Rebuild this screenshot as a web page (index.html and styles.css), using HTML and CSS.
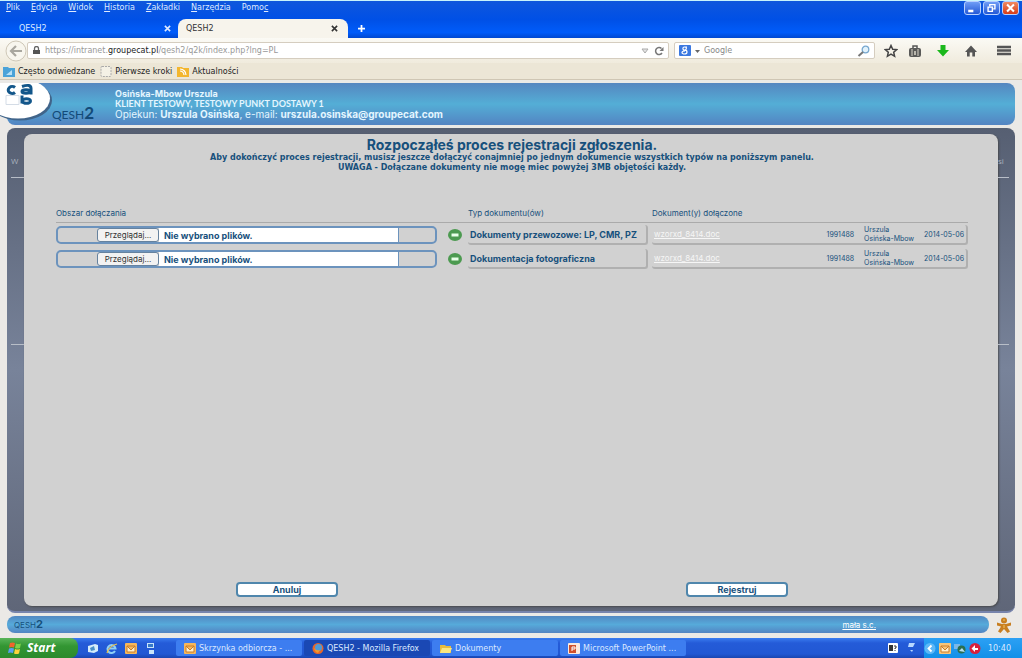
FILE: index.html
```html
<!DOCTYPE html>
<html lang="pl">
<head>
<meta charset="utf-8">
<title>QESH2</title>
<link rel="stylesheet" href="styles.css">
</head>
<body>
<div class="screen">
  <header class="titlebar">
    <div class="menurow">
      <nav class="menu">
        <button><u>P</u>lik</button><button><u>E</u>dycja</button><button><u>W</u>idok</button><button><u>H</u>istoria</button><button><u>Z</u>akładki</button><button><u>N</u>arzędzia</button><button>Pomo<u>c</u></button>
      </nav>
      <div class="wincontrols">
        <button aria-label="Minimalizuj"><svg viewBox="0 0 16 14"><path d="M3 9h6v3H3z" fill="#fff"/></svg></button>
        <button aria-label="Przywróć"><svg viewBox="0 0 16 14"><path d="M6 5V3h6v5h-2M4 6h5v5H4z" fill="none" stroke="#fff" stroke-width="1.6"/></svg></button>
        <button class="close" aria-label="Zamknij"><svg viewBox="0 0 16 14"><path d="M4 3l8 8M12 3l-8 8" stroke="#fff" stroke-width="2.4"/></svg></button>
      </div>
    </div>
    <div class="tabs">
      <div class="tab"><span>QESH2</span><button aria-label="Zamknij kartę"><svg viewBox="0 0 8 8"><path d="M1 1l6 6M7 1L1 7" stroke="currentColor" stroke-width="1.8"/></svg></button></div>
      <div class="tab active"><span>QESH2</span><button aria-label="Zamknij kartę"><svg viewBox="0 0 8 8"><path d="M1 1l6 6M7 1L1 7" stroke="currentColor" stroke-width="1.8"/></svg></button></div>
      <button class="newtab" aria-label="Nowa karta"><svg viewBox="0 0 8 8"><path d="M4 0v8M0 4h8" stroke="#fff" stroke-width="2"/></svg></button>
    </div>
  </header>

  <div class="navbar">
    <button class="back" aria-label="Wstecz"><svg viewBox="0 0 22 22"><circle cx="11" cy="11" r="10" fill="#f8f6ee" stroke="#cfc8b8"/><path d="M11 6l-5 5 5 5M6 11h11" fill="none" stroke="#a9a79f" stroke-width="2.2"/></svg></button>
    <div class="urlbar">
      <svg class="lock" viewBox="0 0 9 9"><path d="M2.500 4V2.500a2 2 0 0 1 4 0V4" fill="none" stroke="#666" stroke-width="1.300"/><path d="M1 4h7v4H1z" fill="#555"/></svg>
      <span class="url">https://intranet.<b>groupecat.pl</b>/qesh2/q2k/index.php?lng=PL</span>
      <svg class="tri" viewBox="0 0 8 6"><path d="M1 1h6L4 5z" fill="#e4e4e4" stroke="#aaa"/></svg>
      <button class="reload" aria-label="Odśwież"><svg viewBox="0 0 10 10"><path d="M8 7a3.500 3.500 0 1 1-.5-4.500" fill="none" stroke="#777" stroke-width="1.500"/><path d="M9.500 1v4H5.500z" fill="#777"/></svg></button>
    </div>
    <div class="searchbar">
      <svg class="glogo" viewBox="0 0 12 11"><rect width="12" height="11" rx="1" fill="#3b78e0"/><path d="M8 2H5.500a1.500 1.500 0 0 0 0 3.200c2 0 2.500.8 2.500 1.800S6.800 9 5.500 9 3 8.400 3 7.400 4.500 6 6 6M6.500 2C8 3 7.500 5 5.500 5" fill="none" stroke="#fff" stroke-width="1.200"/></svg>
      <svg class="caret" viewBox="0 0 5 4"><path d="M0 1h5L2.500 4z" fill="#666"/></svg>
      <input type="text" placeholder="Google" aria-label="Google">
      <svg class="mag" viewBox="0 0 13 12"><circle cx="8.500" cy="4.500" r="3.300" fill="#e2f2fb" stroke="#78a8cf" stroke-width="1.300"/><path d="M6 7l-4.500 4" stroke="#777" stroke-width="2"/></svg>
    </div>
    <div class="tools">
      <button aria-label="Dodaj zakładkę"><svg viewBox="0 0 14 14"><path d="M7 1.500l1.700 3.700 4 .4-3 2.700.9 4L7 10.200l-3.600 2.100.9-4-3-2.700 4-.4z" fill="none" stroke="#444" stroke-width="1.500"/></svg></button>
      <button aria-label="Zakładki"><svg viewBox="0 0 14 14"><path d="M5 4V2h4v2" fill="none" stroke="#555" stroke-width="1.500"/><rect x="1" y="4" width="12" height="9" rx="2" fill="#5a5a58"/><path d="M4 5v7M10 5v7" stroke="#d8d4c8"/><path d="M6 7h2v4H6z" fill="#bbb8ae"/></svg></button>
      <button aria-label="Pobieranie"><svg viewBox="0 0 14 14"><path d="M4.500 1h5v5H13l-6 6.500L1 6h3.500z" fill="#1bb81b"/></svg></button>
      <button aria-label="Strona domowa"><svg viewBox="0 0 14 14"><path d="M7 1.500L13 8h-2v4.500H8.300V8.500H5.700v4H3V8H1z" fill="#555"/></svg></button>
      <button aria-label="Menu"><svg viewBox="0 0 14 14"><path d="M0 3h14M0 6.500h14M0 10h14" stroke="#555" stroke-width="2.400"/></svg></button>
    </div>
  </div>

  <div class="bookmarks">
    <a href="#"><svg viewBox="0 0 12 11"><path d="M0 1h5l1 1h6v9H0z" fill="#4ba3d8"/><path d="M3 9l6-5v5z" fill="#b8e0f5"/></svg>Często odwiedzane</a>
    <a href="#"><svg viewBox="0 0 12 11"><rect x="1" y=".5" width="10" height="10" rx="1" fill="#f4f1e6" stroke="#aaa" stroke-dasharray="2 1"/></svg>Pierwsze kroki</a>
    <a href="#"><svg viewBox="0 0 12 11"><path d="M0 1h5l1 1h6v9H0z" fill="#f3b62e"/><path d="M3 5a4 4 0 0 1 4 4M3 3a6 6 0 0 1 6 6" fill="none" stroke="#fff" stroke-width="1.200"/></svg>Aktualności</a>
  </div>

  <main class="page">
    <div class="apphead">
      <svg class="logo" viewBox="0 0 52 41"><ellipse cx="20" cy="17" rx="32" ry="20" fill="#40648a"/><ellipse cx="18" cy="15" rx="32" ry="20" fill="#fff"/><path d="M6 12h13v9H6z" fill="#fff" stroke="#d4dce6"/><g fill="none" stroke="#12568a" stroke-width="3"><path d="M15 4A4 3.500 0 1 0 15 9"/><path d="M22 3Q31 0 31 5v6"/><ellipse cx="26" cy="8" rx="4" ry="1.800"/><path d="M22 12v8"/><ellipse cx="26.500" cy="17.500" rx="4" ry="2.300"/></g></svg>
      <div class="brand">QESH<b>2</b></div>
      <div class="who">
        <div><b>Osińska-Mbow Urszula</b></div>
        <div class="client"><b>KLIENT TESTOWY, TESTOWY PUNKT DOSTAWY 1</b></div>
        <div class="care">Opiekun: <b>Urszula Osińska</b>, e-mail: <b>urszula.osinska@groupecat.com</b></div>
      </div>
    </div>

    <div class="frame">
      <div class="side"><span>W</span><i></i><i></i></div>
      <section class="panel">
        <h1>Rozpocząłeś proces rejestracji zgłoszenia.</h1>
        <p>Aby dokończyć proces rejestracji, musisz jeszcze dołączyć conajmniej po jednym dokumencie wszystkich typów na poniższym panelu.</p>
        <p>UWAGA - Dołączane dokumenty nie mogę miec powyżej 3MB objętości każdy.</p>
        <table class="docs">
          <thead><tr><th class="c1">Obszar dołączania</th><th class="c2">Typ dokumentu(ów)</th><th>Dokument(y) dołączone</th></tr></thead>
          <tbody>
            <tr>
              <td><div class="pick"><div class="filebox"><label class="browse" for="f1">Przeglądaj...</label><input class="file" type="file" id="f1"><span>Nie wybrano plików.</span></div><button class="minus" aria-label="Usuń"><svg viewBox="0 0 14 12"><ellipse cx="7" cy="6" rx="7" ry="6" fill="#4c9a50"/><path d="M3.500 6h7" stroke="#e8ffe8" stroke-width="3"/></svg></button></div></td>
              <td><div class="type">Dokumenty przewozowe: LP, CMR, PZ</div></td>
              <td><div class="doc"><a href="#">wzorxd_8414.doc</a><span>1991488</span><span>Urszula<br>Osińska-Mbow</span><span>2014-05-06</span></div></td>
            </tr>
            <tr>
              <td><div class="pick"><div class="filebox"><label class="browse" for="f2">Przeglądaj...</label><input class="file" type="file" id="f2"><span>Nie wybrano plików.</span></div><button class="minus" aria-label="Usuń"><svg viewBox="0 0 14 12"><ellipse cx="7" cy="6" rx="7" ry="6" fill="#4c9a50"/><path d="M3.500 6h7" stroke="#e8ffe8" stroke-width="3"/></svg></button></div></td>
              <td><div class="type">Dokumentacja fotograficzna</div></td>
              <td><div class="doc"><a href="#">wzorxd_8414.doc</a><span>1991488</span><span>Urszula<br>Osińska-Mbow</span><span>2014-05-06</span></div></td>
            </tr>
          </tbody>
        </table>
        <div class="actions"><button>Anuluj</button><button>Rejestruj</button></div>
      </section>
      <div class="side right"><span>si</span><i></i><i></i></div>
    </div>

    <footer class="foot">
      <div class="footbar"><span class="fbrand">QESH<b>2</b></span><a href="#">mała s.c.</a></div>
      <svg class="man" viewBox="0 0 16 16"><circle cx="8" cy="3.500" r="3" fill="#c87f22"/><path d="M1 5.500l5 1.500h4l5-1.500v3l-4 1 3 5-2.500 1.500L8 12l-3.500 4L2 14.500l3-5-4-1z" fill="#c87f22"/><path d="M7 3h2M8 8v3" stroke="#f6c55c"/></svg>
    </footer>
  </main>

  <div class="taskbar">
    <button class="start"><svg viewBox="0 0 14 12"><path d="M2 1q2.500-1 5 0L6 5.500Q3.500 4.500 1 5.500z" fill="#f0642c"/><path d="M8 1.500q2.500 1 5 0L12 6Q9.500 7 7 6z" fill="#7ed04a"/><path d="M1 6.500q2.500-1 5 0L5 11Q2.500 10 0 11z" fill="#58a0f4"/><path d="M7 7q2.500 1 5 0l-1 4.500q-2.500 1-5 0z" fill="#fcd43c"/></svg>Start</button>
    <div class="quick">
      <button aria-label="Pulpit"><svg viewBox="0 0 12 11"><path d="M1 3l7-2 3 1v6l-4 2-6-1z" fill="#d5ecfa"/><path d="M3 5l4-2 1 4-4 1z" fill="#4a90c8"/></svg></button>
      <button aria-label="Internet Explorer"><svg viewBox="0 0 12 11"><path d="M9 8a4 4 0 1 1 .5-2.500H3" fill="none" stroke="#8fd0f6" stroke-width="2"/><path d="M1 10Q3 3 11 1" fill="none" stroke="#e6c050" stroke-width="1.200"/></svg></button>
      <button aria-label="Outlook"><svg viewBox="0 0 12 11"><rect width="12" height="11" rx="1" fill="#f7b75a"/><path d="M2 3h8v6H2zM2 3l4 4 4-4" fill="#fff0cc" stroke="#c87d2a"/></svg></button>
      <button aria-label="Sieć"><svg viewBox="0 0 12 11"><path d="M3 0h7v5H3zM5 7h5v4H5z" fill="#c8e4fa"/><path d="M4 1h5v3H4z" fill="#3678c8"/></svg></button>
    </div>
    <div class="tasks">
      <button><svg viewBox="0 0 12 11"><rect width="12" height="11" rx="1" fill="#f7b75a"/><path d="M2 3h8v6H2zM2 3l4 4 4-4" fill="#fff0cc" stroke="#c87d2a"/></svg>Skrzynka odbiorcza - ...</button>
      <button class="on"><svg viewBox="0 0 12 11"><circle cx="6" cy="5.500" r="5.500" fill="#e8662a"/><circle cx="6.500" cy="4.500" r="3.500" fill="#4f9bd8"/><path d="M2 3q0 5 6 4l-2 3q-4-1-4-7" fill="#f39a2c"/></svg>QESH2 - Mozilla Firefox</button>
      <button><svg viewBox="0 0 12 11"><path d="M0 2h5l1 1h5v7H0z" fill="#e8bc3c"/><path d="M2 5h10l-2 5H0z" fill="#fbe680"/></svg>Dokumenty</button>
      <button><svg viewBox="0 0 12 11"><rect width="12" height="11" rx="1" fill="#fbe9dd"/><path d="M1 2h7v8H1z" fill="#d0502c"/><path d="M4 8V4h3v2H4" fill="none" stroke="#fff"/></svg>Microsoft PowerPoint ...</button>
    </div>
    <div class="lang"><svg viewBox="0 0 10 10"><rect width="10" height="10" rx="1" fill="#fff"/><path d="M1 2h4v6H1z" fill="#333"/><path d="M6 3h2v2H7v1M7 7v1" fill="none" stroke="#333"/></svg><svg viewBox="0 0 10 10"><path d="M3 0h6L7 4H2zM4 7h3l-1 2z" fill="#b8d8ff"/></svg></div>
    <div class="tray">
      <svg viewBox="0 0 11 11"><circle cx="5.500" cy="5.500" r="5.500" fill="#5cb8f8"/><path d="M7 2.500l-3 3 3 3" fill="none" stroke="#fff" stroke-width="1.800"/></svg>
      <svg viewBox="0 0 12 11"><rect width="12" height="11" rx="1" fill="#f7c578"/><path d="M2 3h8v6H2zM2 3l4 4 4-4" fill="#fff0cc" stroke="#c87d2a"/></svg>
      <svg viewBox="0 0 12 11"><path d="M0 1h6v5H0z" fill="#7ab8e8"/><circle cx="7.500" cy="6.500" r="4" fill="#2b6f50"/><path d="M5 8l3-3 3 4z" fill="#b8e0f0"/></svg>
      <svg viewBox="0 0 12 11"><circle cx="6" cy="5.500" r="5.500" fill="#d8203c"/><path d="M6 2v3h3v2H6v2L2.500 5.500z" fill="#fff"/></svg>
      <time>10:40</time>
    </div>
  </div>
</div>
</body>
</html>
```

FILE: styles.css
```css
* { box-sizing: border-box; }
body { margin: 0; font-family: "Open Sans", "Noto Sans", sans-serif; font-size: 8px; }
button { border: 0; padding: 0; background: none; font: inherit; color: inherit; display: flex; align-items: center; }
svg { display: block; flex: none; }
a { color: inherit; }
.screen { min-height: 100vh; display: flex; flex-direction: column; background: #ebe9e6; }

.titlebar { height: 38px; display: flex; flex-direction: column; justify-content: space-between; background: linear-gradient(#0f57dc, #0050e6 50%, #005cfa 85%, #0048d0); color: #dfeaff; border-top: 1px solid #c8f4fc; }
.menurow { display: flex; justify-content: space-between; }
.menu { display: flex; gap: 11px; padding-left: 6px; height: 13px; align-items: center; font-family: "DejaVu Sans", sans-serif; }
.wincontrols { display: flex; gap: 2px; padding-right: 3px; }
.wincontrols button { width: 17px; height: 14px; background: linear-gradient(#6f9df6, #2358d6); border: 1px solid #b8d0ff; border-radius: 3px; }
.wincontrols .close { background: linear-gradient(#f08a60, #d63c18); }
.wincontrols svg { width: 15px; height: 12px; }
.tabs { display: flex; height: 19px; align-items: stretch; font-family: "DejaVu Sans", sans-serif; }
.tab { width: 178px; padding: 0 7px 0 19px; display: flex; align-items: center; justify-content: space-between; }
.tab svg, .newtab svg { width: 7px; height: 7px; }
.tab.active { width: 170px; padding: 0 10px 0 8px; background: #f7f4ec; color: #333; border-radius: 8px 8px 0 0; }
.newtab { padding-left: 10px; }

.navbar { height: 25px; display: flex; align-items: center; padding: 0 11px 0 5px; background: linear-gradient(#fbfaf5, #f0ebdd); }
.back svg { width: 22px; height: 22px; }
.urlbar, .searchbar { height: 17px; display: flex; align-items: center; background: #fff; border: 1px solid #d5cdbf; border-radius: 2px; font-family: "DejaVu Sans", sans-serif; }
.urlbar { flex: 1; padding: 0 4px; color: #999; }
.lock { width: 9px; height: 9px; margin-right: 4px; }
.url { flex: 1; }
.url b { font-weight: 400; color: #222; }
.tri { width: 8px; height: 6px; margin-right: 5px; }
.reload svg { width: 10px; height: 10px; }
.searchbar { width: 201px; margin-left: 5px; padding: 0 4px; gap: 4px; }
.glogo { width: 12px; height: 11px; }
.caret { width: 5px; height: 4px; }
.searchbar input { flex: 1; min-width: 0; border: 0; padding: 0; background: none; font: inherit; outline: 0; }
.searchbar input::placeholder { color: #888; }
.mag { width: 13px; height: 12px; }
.tools { display: flex; gap: 14px; margin-left: 9px; }
.tools svg { width: 14px; height: 14px; }
.tools button:first-child { margin-right: -4px; }
.tools button:last-child { margin-left: 5px; }

.bookmarks { height: 17px; display: flex; align-items: center; gap: 5px; padding-left: 3px; background: #ece6d6; border-bottom: 1px solid #cfc6b4; color: #222; font-family: "DejaVu Sans", sans-serif; }
.bookmarks a { display: flex; align-items: center; gap: 3px; text-decoration: none; }
.bookmarks svg { width: 12px; height: 11px; }

.page { flex: 1; display: flex; flex-direction: column; gap: 3px; padding: 3px 7px 5px; color: #17507c; }
.apphead { height: 42px; display: flex; align-items: center; background: linear-gradient(#5586c0, #54aed6 50%, #5384c2); border-radius: 8px; }
.logo { width: 52px; height: 42px; margin-left: -7px; }
.brand { align-self: flex-end; font: 12px/20px Lato, sans-serif; color: #124a78; }
.brand b { font-size: 17px; }
.who { margin-left: 21px; color: #e4f6ff; font: 9px/10px Inter, sans-serif; }
.client { font-family: Lato, sans-serif; }
.care { font-size: 10px; line-height: 11px; }

.frame { flex: 1; display: flex; padding: 6px 0 5px; background: linear-gradient(#565f72, #78839a 50%, #5f6678); border-radius: 8px; border-bottom: 2px solid #7884ac; }
.side { width: 17px; padding: 21px 0 0 4px; display: flex; flex-direction: column; color: #a8b0be; overflow: hidden; }
.side i { height: 1px; background: #b8bec8; margin-top: 11px; }
.side i + i { margin-top: 166px; }
.right { padding: 21px 6px 0 0; }
.panel { flex: 1; display: flex; flex-direction: column; padding: 3px 30px 9px 32px; background: #d1d1d1; border-radius: 8px; box-shadow: 1px 1px 2px #444c; text-align: center; }
h1 { margin: 0; font: 700 14px/16px Inter, sans-serif; }
.panel p { margin: 0; font: 700 8px/10px "DejaVu Sans", sans-serif; }
.docs { width: 100%; margin-top: 35px; border-collapse: collapse; table-layout: fixed; text-align: left; font: 8px/9px Inter, sans-serif; }
.docs th { padding: 0 0 3px; height: 14px; font-weight: 400; border-bottom: 1px solid #aaa; }
.c1 { width: 412px; }
.c2 { width: 184px; }
.docs td { height: 24px; padding: 2px 4px 0 0; }
.docs td:last-child { padding-right: 0; }
.pick { display: flex; align-items: center; padding-right: 2px; gap: 11px; }
.filebox { flex: 1; height: 18px; display: flex; padding: 0 36px 0 39px; border: 2px solid #6c93bd; border-radius: 5px; font-weight: 700; }
.filebox span { flex: 1; display: flex; align-items: center; padding-left: 5px; background: #fff; border-right: 1px solid #6c93bd; font-size: 9px; }
.browse { width: 62px; display: flex; align-items: center; justify-content: center; background: #f2f2f2; border: 1px solid #66829e; border-radius: 3px; color: #333; font-weight: 400; }
.file { position: absolute; width: 1px; height: 1px; opacity: 0; }
.minus svg { width: 14px; height: 12px; }
.type, .doc { height: 20px; display: flex; align-items: center; border: solid #b0b0b0; border-width: 0 2px 2px 0; border-radius: 3px; }
.type { font-size: 9px; font-weight: 700; padding-left: 2px; }
.doc { padding: 0 2px; font-size: 7px; line-height: 9px; gap: 10px; }
.doc a { flex: 1; color: #f6f6f6; font-size: 8px; }
.actions { margin-top: auto; padding: 0 6px; display: flex; justify-content: space-around; }
.actions button { width: 102px; height: 15px; justify-content: center; background: #fff; border: 2px solid #4f86ac; border-radius: 4px; font: 700 9px/11px Inter, sans-serif; }

.foot { display: flex; align-items: center; gap: 7px; }
.footbar { flex: 1; height: 17px; display: flex; align-items: center; justify-content: space-between; padding: 0 113px 0 7px; background: linear-gradient(#5388c2, #56aada 50%, #5384c2); border-radius: 8px; font: 8px/12px Inter, sans-serif; }
.footbar a { color: #fff; }
.fbrand b { font-size: 11px; }
.man { width: 16px; height: 16px; margin-right: 3px; }

.taskbar { height: 20px; display: flex; align-items: stretch; background: linear-gradient(#3a7cf0, #245bd8 25%, #2158d4 80%, #1a46b0); color: #dce8ff; font-family: "DejaVu Sans", sans-serif; }
.start { width: 78px; padding-left: 8px; gap: 5px; background: linear-gradient(#59b459, #339633 40%, #2c8a2c); border-radius: 0 8px 8px 0; font: italic 700 12px/16px "Open Sans", sans-serif; color: #fff; }
.start svg { width: 14px; height: 12px; }
.quick { display: flex; gap: 7px; margin-left: 9px; }
.quick svg, .tasks svg { width: 12px; height: 11px; }
.tasks { flex: 1; display: flex; gap: 2px; margin: 2px 0 2px 20px; }
.tasks button { flex: 0 1 126px; padding-left: 8px; gap: 3px; background: #3d7df0; border-radius: 2px; white-space: nowrap; }
.tasks .on { background: #1a48b4; }
.lang { display: flex; align-items: center; gap: 8px; margin-right: 8px; }
.lang svg { width: 10px; height: 10px; }
.tray { display: flex; align-items: center; gap: 3px; padding: 0 11px 0 0; background: linear-gradient(#2ca0f4, #1290e8); }
.tray svg { width: 12px; height: 11px; }
.tray time { margin-left: 4px; }
```
